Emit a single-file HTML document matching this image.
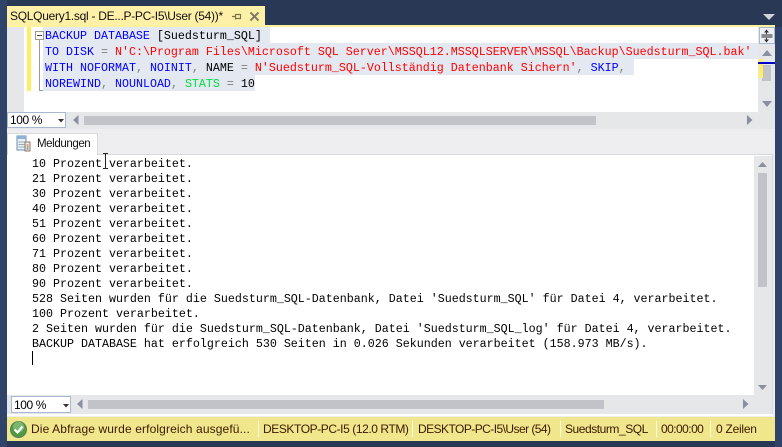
<!DOCTYPE html>
<html><head><meta charset="utf-8">
<style>
html,body{margin:0;padding:0;width:782px;height:447px;overflow:hidden;background:#293955}
div,span{position:absolute;white-space:pre}
.sans{font-family:"Liberation Sans",sans-serif}
.m{font-family:"Liberation Mono",monospace;font-size:11.67px;line-height:16px;height:16px;color:#000;left:45px}
.k{position:static;color:#0000ff}.r{position:static;color:#ff0000}.g{position:static;color:#808080}.p{position:static;color:#00e040}
.o{font-family:"Liberation Mono",monospace;font-size:11.67px;line-height:15px;height:15px;color:#000;left:32px;font-weight:normal}
.sel{background:#e3e8f1;height:16px;left:43px}
.combo{left:7px;width:59px;height:16px;background:#fff;border:1px solid #a9b7d0;box-sizing:border-box;font:12px/15px "Liberation Sans",sans-serif;color:#000;padding-left:2px;letter-spacing:-.4px}
.st{top:417px;height:24px;font:12px/24px "Liberation Sans",sans-serif;color:#3b1a00}
.sep{top:421px;width:1px;height:16px;background:#fdfbe0}
</style></head><body>
<div style="left:0;top:0;width:782px;height:447px;background:#293955"></div>
<div style="left:0;top:0;width:7px;height:447px;background:#2f4468"></div>
<div style="left:775px;top:27px;width:7px;height:420px;background:#2f4468"></div>
<div style="left:7px;top:27px;width:768px;height:390px;background:#eeeef0"></div>

<!-- tab -->
<div style="left:7px;top:6px;width:258px;height:19px;background:#fff0a8"></div>
<div style="left:7px;top:25px;width:768px;height:2px;background:#fff29d"></div>
<div class="sans" style="left:10px;top:7px;height:18px;font-size:12px;line-height:18px;color:#111;letter-spacing:-.28px">SQLQuery1.sql - DE...P-PC-I5\User (54))*</div>
<svg style="position:absolute;left:232px;top:10px" width="32" height="14" viewBox="0 0 32 14">
<path d="M0 6.5H3M3.5 4V9.5M3.5 4.5H8.5V8.5H3.5" fill="none" stroke="#7a7348" stroke-width="1.2"/>
<path d="M18.5 2.5L26.5 10.5M26.5 2.5L18.5 10.5" stroke="#7d7a66" stroke-width="2" fill="none"/>
</svg>
<svg style="position:absolute;left:762px;top:14px" width="14" height="6"><path d="M1 0H13L7 6Z" fill="#ced4dd"/></svg>

<!-- editor -->
<div style="left:7px;top:27px;width:751px;height:85px;background:#fff"></div>
<div style="left:7px;top:27px;width:17px;height:85px;background:#e6e7e8"></div>
<div style="left:27px;top:27px;width:4px;height:64px;background:#ffee62"></div>
<div class="sel" style="top:27px;width:227px"></div>
<div class="sel" style="top:43px;width:715px"></div>
<div class="sel" style="top:59px;width:591px"></div>
<div class="sel" style="top:75px;width:212px"></div>
<div style="left:39px;top:38px;width:1px;height:52px;background:#9a9a9a"></div>
<div style="left:39px;top:90px;width:4px;height:1px;background:#9a9a9a"></div>
<div style="left:35px;top:31px;width:9px;height:9px;box-sizing:border-box;border:1px solid #9a9a9a;background:#fff"></div>
<div style="left:37px;top:35px;width:5px;height:1px;background:#444"></div>
<div class="m" style="top:28px"><span class="k">BACKUP DATABASE</span> [Suedsturm_SQL]</div>
<div class="m" style="top:44px"><span class="k">TO DISK</span> <span class="g">=</span> <span class="r">N'C:\Program Files\Microsoft SQL Server\MSSQL12.MSSQLSERVER\MSSQL\Backup\Suedsturm_SQL.bak'</span></div>
<div class="m" style="top:60px"><span class="k">WITH NOFORMAT</span><span class="g">,</span> <span class="k">NOINIT</span><span class="g">,</span> NAME <span class="g">=</span> <span class="r">N'Suedsturm_SQL-Vollständig Datenbank Sichern'</span><span class="g">,</span> <span class="k">SKIP</span><span class="g">,</span></div>
<div class="m" style="top:76px"><span class="k">NOREWIND</span><span class="g">,</span> <span class="k">NOUNLOAD</span><span class="g">,</span> <span class="p">STATS</span> <span class="g">=</span> 10</div>

<!-- editor v scrollbar -->
<div style="left:758px;top:27px;width:17px;height:85px;background:#e6e7e8"></div>
<div style="left:762px;top:65px;width:9px;height:16px;background:#c2c3c9"></div>
<div style="left:759px;top:59px;width:4px;height:19px;background:#ffee62"></div>
<div style="left:758px;top:62px;width:17px;height:2px;background:#0000c8"></div>
<div style="left:759px;top:27px;width:16px;height:17px;box-sizing:border-box;border:1px solid #a9b7d0;background:#eef0f5"></div>
<svg style="position:absolute;left:760px;top:28px" width="14" height="16"><path d="M1.5 7H12.5M1.5 9H12.5" stroke="#222" stroke-width="1"/><path d="M6.5 2V6M6.5 10V14" stroke="#333"/><path d="M4 4.5L6.5 1.5L9 4.5ZM4 11.5L6.5 14.5L9 11.5Z" fill="#333"/></svg>
<svg style="position:absolute;left:762px;top:50px" width="10" height="6"><path d="M0 6L5 0L10 6Z" fill="#8a8fa3"/></svg>
<svg style="position:absolute;left:762px;top:101px" width="10" height="6"><path d="M0 0H10L5 6Z" fill="#8a8fa3"/></svg>

<!-- editor h scrollbar -->
<div style="left:7px;top:112px;width:768px;height:17px;background:#e6e7e8"></div>
<div class="combo" style="top:112px">100 %</div>
<svg style="position:absolute;left:58px;top:119px" width="6" height="4"><path d="M0 0H6L3 3.5Z" fill="#333"/></svg>
<svg style="position:absolute;left:73px;top:115px" width="6" height="11"><path d="M5.5 0V10L0 5Z" fill="#8a8fa3"/></svg>
<div style="left:84px;top:116px;width:512px;height:9px;background:#c2c3c9"></div>
<svg style="position:absolute;left:747px;top:115px" width="6" height="11"><path d="M0 0V10L5.5 5Z" fill="#8a8fa3"/></svg>

<!-- results tab -->
<div style="left:7px;top:133px;width:91px;height:22px;background:#fff;border:1px solid #d9d9da;border-bottom:none;box-sizing:border-box"></div>
<svg style="position:absolute;left:16px;top:135px" width="15" height="17" viewBox="0 0 15 17">
<rect x="1" y="1" width="9" height="14" fill="#e8f0f8" stroke="#6e8db0"/>
<rect x="1" y="1" width="9" height="3" fill="#8fb2d6"/>
<path d="M2.5 7H8.5M2.5 9.5H8.5M2.5 12H8.5" stroke="#9ab"/>
<rect x="9" y="7" width="5" height="9" fill="#f5ece0" stroke="#8a7a64"/>
<path d="M10.5 10H12.5" stroke="#d05030"/><path d="M10.5 12H12.5" stroke="#3a8a3a"/><path d="M10.5 14H12.5" stroke="#3060c0"/>
</svg>
<div class="sans" style="left:37px;top:136px;height:16px;font-size:11.5px;line-height:16px;color:#111;letter-spacing:-.4px">Meldungen</div>

<!-- results -->
<div style="left:7px;top:154px;width:766px;height:1px;background:#d9d9da"></div>
<div style="left:7px;top:155px;width:765px;height:259px;background:#fff"></div>
<div style="left:8px;top:154px;width:89px;height:2px;background:#fff"></div>
<div style="left:772px;top:154px;width:1px;height:262px;background:#d9d9da"></div>
<div style="left:7px;top:414px;width:766px;height:2px;background:#fff"></div>

<div class="o" style="top:157px">10 Prozent verarbeitet.</div>
<div class="o" style="top:172px">21 Prozent verarbeitet.</div>
<div class="o" style="top:187px">30 Prozent verarbeitet.</div>
<div class="o" style="top:202px">40 Prozent verarbeitet.</div>
<div class="o" style="top:217px">51 Prozent verarbeitet.</div>
<div class="o" style="top:232px">60 Prozent verarbeitet.</div>
<div class="o" style="top:247px">71 Prozent verarbeitet.</div>
<div class="o" style="top:262px">80 Prozent verarbeitet.</div>
<div class="o" style="top:277px">90 Prozent verarbeitet.</div>
<div class="o" style="top:292px">528 Seiten wurden für die Suedsturm_SQL-Datenbank, Datei 'Suedsturm_SQL' für Datei 4, verarbeitet.</div>
<div class="o" style="top:307px">100 Prozent verarbeitet.</div>
<div class="o" style="top:322px">2 Seiten wurden für die Suedsturm_SQL-Datenbank, Datei 'Suedsturm_SQL_log' für Datei 4, verarbeitet.</div>
<div class="o" style="top:337px">BACKUP DATABASE hat erfolgreich 530 Seiten in 0.026 Sekunden verarbeitet (158.973 MB/s).</div>
<div style="left:32px;top:351px;width:1px;height:14px;background:#000"></div>
<svg style="position:absolute;left:102px;top:153px" width="7" height="16"><path d="M1 .5H3L3.5 1L4 .5H6M3.5 1V15M1 15.5H3L3.5 15L4 15.5H6" fill="none" stroke="#222"/></svg>

<!-- results v scrollbar -->
<div style="left:754px;top:156px;width:18px;height:239px;background:#e6e7e8"></div>
<svg style="position:absolute;left:758px;top:162px" width="9" height="5"><path d="M0 5L4.5 0L9 5Z" fill="#8a8fa3"/></svg>
<div style="left:758px;top:173px;width:9px;height:114px;background:#c2c3c9"></div>
<svg style="position:absolute;left:758px;top:385px" width="9" height="5"><path d="M0 0H9L4.5 5Z" fill="#8a8fa3"/></svg>

<!-- results h scrollbar -->
<div style="left:7px;top:395px;width:765px;height:19px;background:#e6e7e8"></div>
<div class="combo" style="left:11px;top:396px;height:17px;width:60px;line-height:16px">100 %</div>
<svg style="position:absolute;left:63px;top:404px" width="6" height="4"><path d="M0 0H6L3 3.5Z" fill="#333"/></svg>
<svg style="position:absolute;left:77px;top:399px" width="6" height="11"><path d="M5.5 0V10L0 5Z" fill="#8a8fa3"/></svg>
<div style="left:88px;top:400px;width:516px;height:9px;background:#c2c3c9"></div>
<svg style="position:absolute;left:743px;top:399px" width="6" height="11"><path d="M0 0V10L5.5 5Z" fill="#8a8fa3"/></svg>

<!-- status bar -->
<div style="left:7px;top:417px;width:768px;height:24px;background:#f0e68c"></div>
<svg style="position:absolute;left:10px;top:421px" width="17" height="17" viewBox="0 0 17 17">
<circle cx="8.5" cy="8.5" r="8" fill="#4f9a45" stroke="#5d7f55"/>
<circle cx="8.5" cy="6" r="5.5" fill="#8cc47e" opacity=".7"/>
<path d="M4.5 8.5L7.5 11.5L12.5 5.5" fill="none" stroke="#fff" stroke-width="2.2"/>
</svg>
<div class="st" style="left:31px;letter-spacing:.12px">Die Abfrage wurde erfolgreich ausgefü...</div>
<div class="sep" style="left:258px"></div>
<div class="st" style="left:263px;letter-spacing:-.42px">DESKTOP-PC-I5 (12.0 RTM)</div>
<div class="sep" style="left:412px"></div>
<div class="st" style="left:418px;letter-spacing:-.55px">DESKTOP-PC-I5\User (54)</div>
<div class="sep" style="left:560px"></div>
<div class="st" style="left:565px;letter-spacing:-.45px">Suedsturm_SQL</div>
<div class="sep" style="left:656px"></div>
<div class="st" style="left:661px;letter-spacing:-.55px">00:00:00</div>
<div class="sep" style="left:710px"></div>
<div class="st" style="left:716px;letter-spacing:-.25px">0 Zeilen</div>
</body></html>
